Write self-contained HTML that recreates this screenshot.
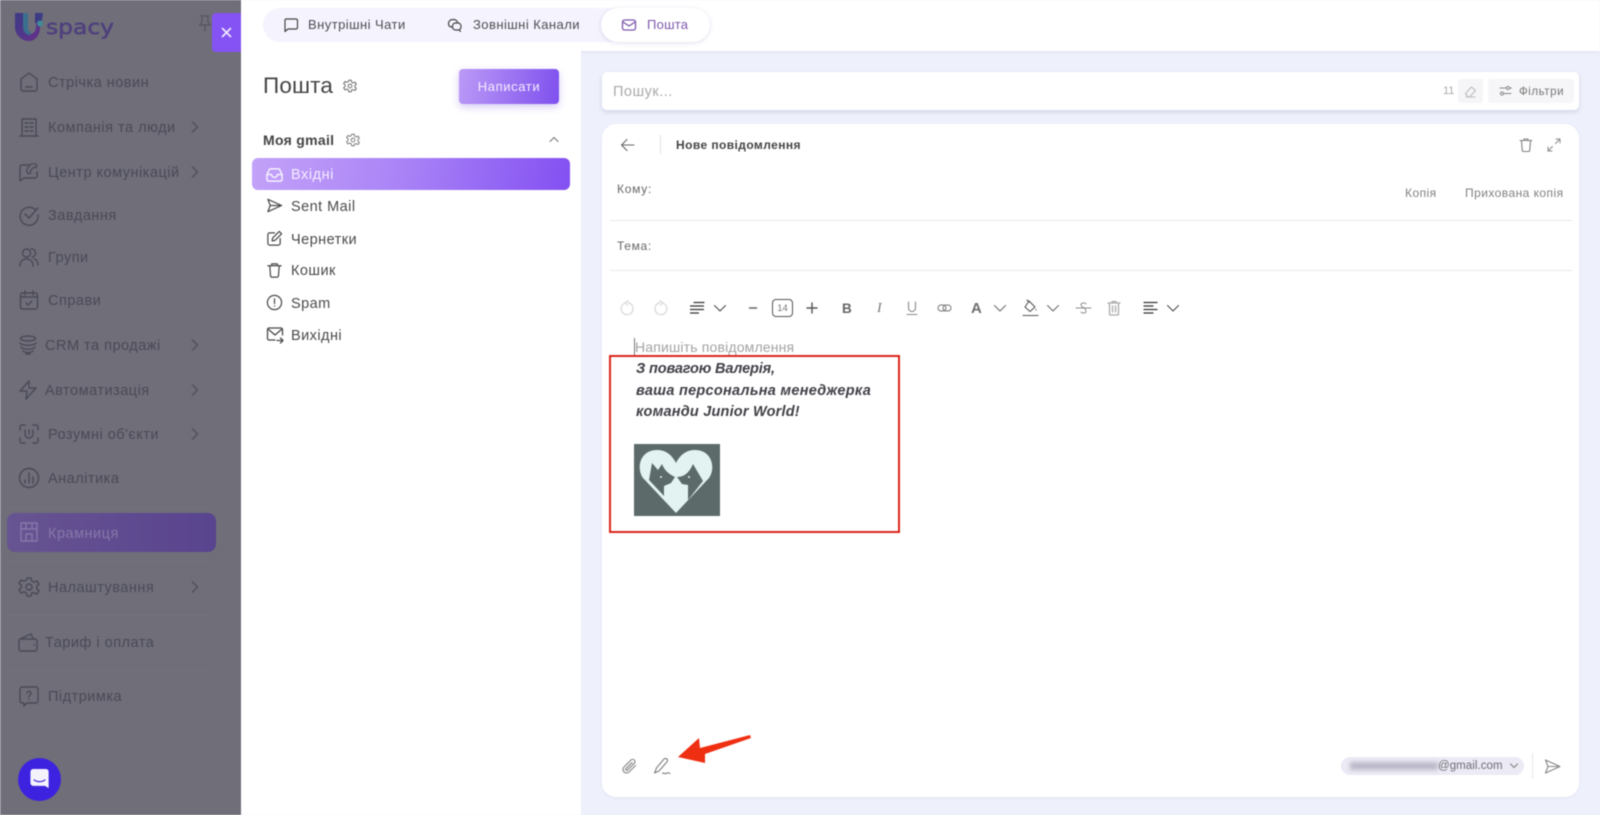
<!DOCTYPE html>
<html lang="uk"><head><meta charset="utf-8"><title>Пошта</title>
<style>
html,body{margin:0;padding:0;width:1600px;height:815px;overflow:hidden;background:#eef0fb}
body{font-family:"Liberation Sans",sans-serif;position:relative}
#w{position:absolute;left:0;top:0;width:1600px;height:815px;filter:blur(.45px);overflow:hidden}
.a{position:absolute}
.t{position:absolute;white-space:nowrap;line-height:18px;height:18px}
svg.i{position:absolute;fill:none;stroke-linecap:round;stroke-linejoin:round}
.m{color:#4a4a57;font-size:14.5px;letter-spacing:.5px}
.m2{color:#4b4b4b;font-size:14.5px;letter-spacing:.45px}
svg.s1{stroke:#4a4a57;stroke-width:1.4}
svg.s2{stroke:#4a4a4a;stroke-width:1.3}
svg.s3{stroke:#444;stroke-width:1.2}
svg.s4{stroke:#8a8a8a;stroke-width:1.3}
.sep{position:absolute;left:8px;width:200px;height:1px;background:#74737d}
</style></head><body><div id="w">

<!-- sidebar -->
<div class="a" style="left:0;top:0;width:241px;height:815px;background:#6f6e79"></div>
<div class="a" style="left:0;top:0;width:1px;height:815px;background:#85848d"></div>
<!-- logo -->
<svg class="a" style="left:13px;top:11px" width="105" height="32" viewBox="0 0 105 32">
<defs><linearGradient id="lg" x1="0" y1="0" x2="1" y2="1"><stop offset="0" stop-color="#3c3b85"/><stop offset=".6" stop-color="#56358a"/><stop offset="1" stop-color="#6a2f86"/></linearGradient></defs>
<path d="M2 2h9v13c0 5 2.500 8 6 8s6-3 6-7V2h5l2 0h0v0c-.5 2-1 3-2 4l-1 11c-.5 8-5 13-11 13S2 25 2 16z" fill="url(#lg)"/>
<path d="M10 2h5v15c0 2 1 4 3 4l-1 3c-4 0-7-3-7-8z" fill="#3a6f8e"/>
<path d="M22 2h8l-1 7-4 3-3 0z" fill="#3d3a86"/>
<circle cx="27" cy="12.500" r="3" fill="#3f8b96"/>
<text x="33" y="23" font-family="DejaVu Sans,sans-serif" font-size="20" fill="#4f3f7d" stroke="#4f3f7d" stroke-width=".5" textLength="68" lengthAdjust="spacingAndGlyphs">spacy</text>
</svg>
<!-- pin -->
<svg class="i" style="left:197px;top:14px" width="16" height="19" viewBox="0 0 16 19" stroke="#55545f" stroke-width="1.200"><path d="M4 2h8M5 2v6L2.500 11h11L11 8V2M8 11v6"/></svg>
<!-- close -->
<div class="a" style="left:212px;top:13px;width:29px;height:39px;background:#8553f3;border-radius:4px 0 0 4px"></div>
<svg class="i" style="left:220px;top:26px" width="13" height="13" viewBox="0 0 13 13" stroke="#f3ecff" stroke-width="1.600"><path d="M2.500 2.500l8 8M10.500 2.500l-8 8"/></svg>

<div class="sep" style="top:507px"></div><div class="sep" style="top:561px"></div><div class="sep" style="top:615px"></div><div class="sep" style="top:670px"></div>
<!-- Krамниця pill -->
<div class="a" style="left:7px;top:513px;width:209px;height:39px;border-radius:8px;background:linear-gradient(90deg,#675491,#59448f)"></div>

<div class="t m" style="left:48px;top:74px">Стрічка новин</div>
<div class="t m" style="left:48px;top:119px">Компанія та люди</div>
<div class="t m" style="left:48px;top:164px">Центр комунікацій</div>
<div class="t m" style="left:48px;top:207px">Завдання</div>
<div class="t m" style="left:48px;top:249px">Групи</div>
<div class="t m" style="left:48px;top:292px">Справи</div>
<div class="t m" style="left:45px;top:337px">CRM та продажі</div>
<div class="t m" style="left:45px;top:382px">Автоматизація</div>
<div class="t m" style="left:48px;top:426px">Розумні об'єкти</div>
<div class="t m" style="left:48px;top:470px">Аналітика</div>
<div class="t m" style="left:48px;top:525px;color:#8777a9">Крамниця</div>
<div class="t m" style="left:48px;top:579px">Налаштування</div>
<div class="t m" style="left:45px;top:634px">Тариф і оплата</div>
<div class="t m" style="left:48px;top:688px">Підтримка</div>

<!-- sidebar icons -->
<svg class="i s1" style="left:18px;top:71px" width="22" height="22" viewBox="0 0 22 22"><path d="M3 8l8-6 8 6v10a2 2 0 0 1-2 2H5a2 2 0 0 1-2-2z"/><path d="M8 16h6"/></svg>
<svg class="i s1" style="left:18px;top:116px" width="22" height="22" viewBox="0 0 22 22"><path d="M4 20V3h14v17M2 20h18M7 7h3M12 7h3M7 11h3M12 11h3M7 15h3M12 15h3"/></svg>
<svg class="i s1" style="left:18px;top:161px" width="22" height="22" viewBox="0 0 22 22"><path d="M12 4H4a2 2 0 0 0-2 2v14l4-3h11a2 2 0 0 0 2-2v-4"/><path d="M13 3a6 6 0 0 1 6 1l-1 3-2-1-2 2-2 2 1 2-3 1a6 6 0 0 1-1-5z" stroke-width="1.200"/></svg>
<svg class="i s1" style="left:18px;top:204px" width="22" height="22" viewBox="0 0 22 22"><path d="M18 6.500A9 9 0 1 0 20 11"/><path d="M7 10l4 4 9-10"/></svg>
<svg class="i s1" style="left:18px;top:246px" width="22" height="22" viewBox="0 0 22 22"><circle cx="8.500" cy="7" r="4"/><path d="M13 3a4 4 0 0 1 1 8M2 20c0-5 3-7 6.500-7s6.500 2 6.500 7M16 13c2.500.5 4 3 4 6"/></svg>
<svg class="i s1" style="left:18px;top:289px" width="22" height="22" viewBox="0 0 22 22"><rect x="2.500" y="4" width="17" height="16" rx="2"/><path d="M2.500 8h17M7 2v4M15 2v4M8 14l2 2 4-4"/></svg>
<svg class="i s1" style="left:17px;top:334px" width="22" height="22" viewBox="0 0 22 22"><ellipse cx="11" cy="4.500" rx="7.500" ry="2.500"/><path d="M3 9c2 3 14 3 16 0M4 13c2 3 12 3 14 0M6 17c2 2 8 2 10 0M9 20h4"/></svg>
<svg class="i s1" style="left:17px;top:379px" width="22" height="22" viewBox="0 0 22 22"><path d="M12 2L3 12h7l-1 8 10-11h-7z"/></svg>
<svg class="i s1" style="left:18px;top:423px" width="22" height="22" viewBox="0 0 22 22"><path d="M2 7V4a2 2 0 0 1 2-2h3M15 2h3a2 2 0 0 1 2 2v3M20 15v3a2 2 0 0 1-2 2h-3M7 20H4a2 2 0 0 1-2-2v-3M7 7v4a4 4 0 0 0 8 0V7M11 7v4"/></svg>
<svg class="i s1" style="left:18px;top:467px" width="22" height="22" viewBox="0 0 22 22"><circle cx="11" cy="11" r="9.500"/><path d="M7 13v3M11 6v10M15 10v6"/></svg>
<svg class="i" style="left:18px;top:521px" width="22" height="22" viewBox="0 0 22 22" stroke="#8777a9" stroke-width="1.400"><path d="M3 2h16v18H3zM3 8h16M8 2v6M14 2v6M8 20v-7h6v7"/></svg>
<svg class="i s1" style="left:18px;top:576px" width="22" height="22" viewBox="0 0 22 22"><circle cx="11" cy="11" r="3"/><path d="M9 2h4l.7 3 2.500 1.200 2.800-1.300 2 3.400-2.300 2v2.400l2.300 2-2 3.400-2.800-1.300L13.700 17l-.7 3H9l-.7-3-2.500-1.200L3 17.100l-2-3.400 2.300-2V9.300L1 7.300l2-3.400 2.800 1.300L8.300 4z"/></svg>
<svg class="i s1" style="left:17px;top:631px" width="22" height="22" viewBox="0 0 22 22"><path d="M3 8l11-5 2 5M3 8h15a2 2 0 0 1 2 2v8a2 2 0 0 1-2 2H4a2 2 0 0 1-2-2v-9"/><path d="M17 14h.5"/></svg>
<svg class="i s1" style="left:18px;top:685px" width="22" height="22" viewBox="0 0 22 22"><path d="M4 2h14a2 2 0 0 1 2 2v12a2 2 0 0 1-2 2H9l-3 3v-3H4a2 2 0 0 1-2-2V4a2 2 0 0 1 2-2z"/><path d="M9 8a2 2 0 1 1 3 2l-1 1v1M11 14.500v.2"/></svg>
<!-- chevrons -->
<svg class="i" style="left:190px;top:120px" width="10" height="14" viewBox="0 0 10 14" stroke="#55545f" stroke-width="1.700"><path d="M2.500 2l5 5-5 5"/></svg>
<svg class="i" style="left:190px;top:165px" width="10" height="14" viewBox="0 0 10 14" stroke="#55545f" stroke-width="1.700"><path d="M2.500 2l5 5-5 5"/></svg>
<svg class="i" style="left:190px;top:338px" width="10" height="14" viewBox="0 0 10 14" stroke="#55545f" stroke-width="1.700"><path d="M2.500 2l5 5-5 5"/></svg>
<svg class="i" style="left:190px;top:383px" width="10" height="14" viewBox="0 0 10 14" stroke="#55545f" stroke-width="1.700"><path d="M2.500 2l5 5-5 5"/></svg>
<svg class="i" style="left:190px;top:427px" width="10" height="14" viewBox="0 0 10 14" stroke="#55545f" stroke-width="1.700"><path d="M2.500 2l5 5-5 5"/></svg>
<svg class="i" style="left:190px;top:580px" width="10" height="14" viewBox="0 0 10 14" stroke="#55545f" stroke-width="1.700"><path d="M2.500 2l5 5-5 5"/></svg>
<!-- chat bubble -->
<div class="a" style="left:18px;top:758px;width:43px;height:43px;border-radius:50%;background:#3d22e0"></div>
<svg class="a" style="left:30px;top:769px" width="20" height="20" viewBox="0 0 21 22"><path d="M3 0h14a3 3 0 0 1 3 3v18l-4-2.500H3a3 3 0 0 1-3-3V3a3 3 0 0 1 3-3z" fill="#f4f3fb"/><path d="M4 12c3 2.500 9 2.500 12 0" fill="none" stroke="#3d22e0" stroke-width="1.300" stroke-linecap="round"/></svg>

<!-- top bar -->
<div class="a" style="left:241px;top:0;width:1359px;height:51px;background:#fff;box-shadow:0 1px 4px rgba(120,120,170,.12)"></div>
<div class="a" style="left:263px;top:8px;width:447px;height:34px;border-radius:17px;background:#f5f3fd"></div>
<div class="a" style="left:601px;top:8px;width:109px;height:34px;border-radius:17px;background:#fff;box-shadow:0 1px 5px rgba(110,90,170,.2)"></div>
<svg class="i s3" style="left:283px;top:17px" width="16" height="16" viewBox="0 0 16 16"><path d="M3 2h10a1.500 1.500 0 0 1 1.500 1.500v7A1.500 1.500 0 0 1 13 12H5l-3 2.500V3A1 1 0 0 1 3 2z"/></svg>
<svg class="i s3" style="left:447px;top:17px" width="16" height="16" viewBox="0 0 16 16"><path d="M5 10c-2.500 0-3.500-1.500-3.500-3.500S3 2.500 6 2.500s4.500 1.500 4.500 3"/><rect x="5.500" y="6" width="8.500" height="7" rx="3"/><path d="M12 13l1.500 1.500"/></svg>
<svg class="i" style="left:621px;top:17px" width="16" height="16" viewBox="0 0 16 16" stroke="#7c57ab" stroke-width="1.300"><rect x="1.500" y="3" width="13" height="10" rx="2"/><path d="M2 5l6 4 6-4"/></svg>
<div class="t" style="left:308px;top:16px;font-size:13px;color:#4d4d52;letter-spacing:.45px">Внутрішні Чати</div>
<div class="t" style="left:473px;top:16px;font-size:13px;color:#4d4d52;letter-spacing:.45px">Зовнішні Канали</div>
<div class="t" style="left:647px;top:16px;font-size:13px;color:#7c57ab;letter-spacing:.25px">Пошта</div>

<!-- left panel -->
<div class="a" style="left:241px;top:51px;width:340px;height:764px;background:#fff"></div>
<div class="t" style="left:263px;top:75px;font-size:22.500px;line-height:22px;height:22px;color:#444;letter-spacing:.15px">Пошта</div>
<svg class="i" style="left:343px;top:79px" width="14" height="14" viewBox="0 0 22 22" stroke-width="1.500" stroke="#666"><circle cx="11" cy="11" r="3"/><path d="M9 2h4l.7 3 2.500 1.200 2.800-1.300 2 3.400-2.300 2v2.400l2.300 2-2 3.400-2.800-1.300L13.700 17l-.7 3H9l-.7-3-2.500-1.200L3 17.100l-2-3.400 2.300-2V9.300L1 7.300l2-3.400 2.800 1.300L8.300 4z"/></svg>
<div class="a" style="left:459px;top:69px;width:100px;height:35px;border-radius:4px;background:linear-gradient(100deg,#bb9af7,#7f50ee);box-shadow:0 3px 8px rgba(120,80,220,.3);color:#f4edff;font-size:13px;line-height:35px;text-align:center;letter-spacing:.6px">Написати</div>
<div class="t" style="left:263px;top:131px;font-size:14px;font-weight:700;color:#444;letter-spacing:.3px">Моя gmail</div>
<svg class="i" style="left:346px;top:133px" width="14" height="14" viewBox="0 0 22 22" stroke-width="1.500" stroke="#777"><circle cx="11" cy="11" r="3"/><path d="M9 2h4l.7 3 2.500 1.200 2.800-1.300 2 3.400-2.300 2v2.400l2.300 2-2 3.400-2.800-1.300L13.700 17l-.7 3H9l-.7-3-2.500-1.200L3 17.100l-2-3.400 2.300-2V9.300L1 7.300l2-3.400 2.800 1.300L8.300 4z"/></svg>
<svg class="i" style="left:548px;top:135px" width="12" height="9" viewBox="0 0 12 9" stroke="#777" stroke-width="1.100"><path d="M2 6.500l4-4 4 4"/></svg>
<div class="a" style="left:252px;top:158px;width:318px;height:32px;border-radius:6px;background:linear-gradient(100deg,#c3a2f8 0%,#ab85f7 45%,#8350f2 100%)"></div>
<svg class="i" style="left:266px;top:166px" width="17" height="17" viewBox="0 0 18 18" stroke="#f6f0ff" stroke-width="1.600"><path d="M4 3h10l3 6v5a2 2 0 0 1-2 2H3a2 2 0 0 1-2-2V9z"/><path d="M1 9h5c0 2 1 3 3 3s3-1 3-3h5"/></svg>
<div class="t" style="left:291px;top:166px;font-size:14.500px;color:#f4edff;letter-spacing:.55px">Вхідні</div>
<div class="t m2" style="left:291px;top:198px">Sent Mail</div>
<div class="t m2" style="left:291px;top:231px">Чернетки</div>
<div class="t m2" style="left:291px;top:262px">Кошик</div>
<div class="t m2" style="left:291px;top:295px">Spam</div>
<div class="t m2" style="left:291px;top:327px">Вихідні</div>
<svg class="i s2" style="left:266px;top:197px" width="17" height="17" viewBox="0 0 18 18"><path d="M2 2.500L16.500 9 2 15.500 4.500 9zM4.500 9h12"/></svg>
<svg class="i s2" style="left:266px;top:230px" width="17" height="17" viewBox="0 0 18 18"><path d="M9 3H4a2 2 0 0 0-2 2v9a2 2 0 0 0 2 2h9a2 2 0 0 0 2-2V9"/><path d="M7 8.500L14 1.500l2.500 2.500-7 7L6.500 11.500z"/></svg>
<svg class="i s2" style="left:266px;top:262px" width="17" height="17" viewBox="0 0 18 18"><path d="M2 4h14M6 4V2h6v2M4 4l.8 10.500A1.500 1.500 0 0 0 6.300 16h5.400a1.500 1.500 0 0 0 1.500-1.500L14 4"/></svg>
<svg class="i s2" style="left:266px;top:294px" width="17" height="17" viewBox="0 0 18 18"><circle cx="9" cy="9" r="7.500"/><path d="M9 5v5M9 12.500v.3"/></svg>
<svg class="i s2" style="left:266px;top:326px" width="18" height="18" viewBox="0 0 18 18"><path d="M9 14H3a1.500 1.500 0 0 1-1.500-1.500v-9A1.500 1.500 0 0 1 3 2h12a1.500 1.500 0 0 1 1.500 1.500V9"/><path d="M2 3l7 6 7-6M11 14.500h6M14.500 12l2.500 2.500-2.500 2.500"/></svg>

<!-- search -->
<div class="a" style="left:602px;top:72px;width:977px;height:38px;background:#fff;border-radius:5px;box-shadow:0 2px 5px rgba(110,110,160,.22)"></div>
<div class="t" style="left:613px;top:83px;font-size:14.500px;color:#a9a9a9;letter-spacing:.5px">Пошук...</div>
<div class="t" style="left:1443px;top:82px;font-size:11px;color:#aaa">11</div>
<div class="a" style="left:1458px;top:79px;width:25px;height:24px;background:#f5f5f7;border-radius:3px"></div>
<svg class="i" style="left:1463px;top:84px" width="15" height="15" viewBox="0 0 15 15" stroke="#bbb" stroke-width="1.100"><path d="M3 13h9M2.500 9.500l6-6.500 4 3.500-6 6.500H5z"/></svg>
<div class="a" style="left:1488px;top:79px;width:86px;height:24px;background:#f6f6f8;border-radius:3px"></div>
<svg class="i" style="left:1499px;top:85px" width="13" height="12" viewBox="0 0 13 12" stroke="#888" stroke-width="1"><circle cx="9" cy="3" r="1.500"/><circle cx="3" cy="8.500" r="1.500"/><path d="M1 3h6M11 3h1.500M5 8.500h7"/></svg>
<div class="t" style="left:1519px;top:83px;font-size:11.500px;color:#777;letter-spacing:.55px">Фільтри</div>

<!-- composer -->
<div class="a" style="left:602px;top:124px;width:977px;height:673px;background:#fff;border-radius:14px;box-shadow:0 1px 3px rgba(110,110,160,.08)"></div>
<svg class="i" style="left:620px;top:138px" width="15" height="14" viewBox="0 0 15 14" stroke="#666" stroke-width="1.100"><path d="M14 7H1.500M7 1.500L1.500 7 7 12.500"/></svg>
<div class="a" style="left:660px;top:135px;width:1px;height:19px;background:#e2e2e6"></div>
<div class="t" style="left:676px;top:136px;font-size:12px;font-weight:700;color:#444;letter-spacing:.42px">Нове повідомлення</div>
<svg class="i" style="left:1518px;top:137px" width="16" height="16" viewBox="0 0 16 16" stroke="#808080" stroke-width="1.100"><path d="M2 3.500h12M6 3.500V2h4v1.500M3.500 3.500l.7 9.500a1.500 1.500 0 0 0 1.500 1.500h4.600a1.500 1.500 0 0 0 1.500-1.500l.7-9.500"/></svg>
<svg class="i" style="left:1546px;top:137px" width="16" height="16" viewBox="0 0 16 16" stroke="#8a8a8a" stroke-width="1"><path d="M9.500 6.500L14 2M10 2h4v4M6.500 9.500L2 14M2 10v4h4"/></svg>
<div class="t" style="left:617px;top:180px;font-size:12px;color:#666;letter-spacing:.75px">Кому:</div>
<div class="t" style="left:1405px;top:184px;font-size:12px;color:#808080;letter-spacing:.45px">Копія</div>
<div class="t" style="left:1465px;top:184px;font-size:12px;color:#808080;letter-spacing:.45px">Прихована копія</div>
<div class="a" style="left:610px;top:220px;width:962px;height:1px;background:#e9e9ee"></div>
<div class="t" style="left:617px;top:237px;font-size:12px;color:#666;letter-spacing:.65px">Тема:</div>
<div class="a" style="left:610px;top:270px;width:962px;height:1px;background:#e9e9ee"></div>

<!-- toolbar -->
<svg class="i" style="left:620px;top:300px" width="16" height="16" viewBox="0 0 16 16" stroke="#dadada" stroke-width="1.300"><path d="M4 3.500a6 6 0 1 0 4-.8M8 .8L5 2.800l2.500 2.400"/></svg>
<svg class="i" style="left:652px;top:300px" width="16" height="16" viewBox="0 0 16 16" stroke="#dadada" stroke-width="1.300"><path d="M12 3.500a6 6 0 1 1-4-.8M8 .8l3 2-2.500 2.400"/></svg>
<svg class="i" style="left:689px;top:300px" width="16" height="16" viewBox="0 0 16 16" stroke="#333" stroke-width="1.200"><path d="M5 2.500h10M1.500 6h13M1.500 9.500h13M1.500 13h8"/></svg>
<svg class="i" style="left:713px;top:303px" width="14" height="10" viewBox="0 0 14 10" stroke="#444" stroke-width="1"><path d="M1.500 2.500L7 8l5.500-5.500"/></svg>
<svg class="i" style="left:748px;top:303px" width="10" height="10" viewBox="0 0 10 10" stroke="#666" stroke-width="1.500"><path d="M1.500 5h7"/></svg>
<div class="a" style="left:772px;top:299px;width:19px;height:16px;border:1.500px solid #555;border-radius:4px;font-size:9.500px;line-height:17px;text-align:center;color:#777">14</div>
<svg class="i" style="left:806px;top:302px" width="12" height="12" viewBox="0 0 12 12" stroke="#555" stroke-width="1.400"><path d="M1 6h10M6 1v10"/></svg>
<div class="t" style="left:842px;top:300px;font-size:13.500px;font-weight:700;color:#666">B</div>
<div class="t" style="left:877px;top:300px;font-size:14px;font-style:italic;font-family:'Liberation Serif',serif;color:#777">I</div>
<svg class="i" style="left:905px;top:300px" width="14" height="16" viewBox="0 0 14 16" stroke="#888" stroke-width="1.100"><path d="M3.500 2v6a3.500 3.500 0 0 0 7 0V2M2 14.500h10"/></svg>
<svg class="i" style="left:937px;top:302px" width="15" height="12" viewBox="0 0 15 12" stroke="#777" stroke-width="1"><rect x="1" y="3" width="8" height="6" rx="3"/><rect x="6" y="3" width="8" height="6" rx="3"/></svg>
<div class="t" style="left:971px;top:300px;font-size:15px;font-weight:700;color:#6f6f6f">A</div>
<svg class="i" style="left:993px;top:303px" width="14" height="10" viewBox="0 0 14 10" stroke="#666" stroke-width="1"><path d="M1.500 2.500L7 8l5.500-5.500"/></svg>
<svg class="i" style="left:1022px;top:299px" width="18" height="18" viewBox="0 0 18 18" stroke="#555" stroke-width="1.100"><path d="M7 2l6 6-5 4.500L3 8zM5 1l2 2M14 10.500v.5M1 16.500h15"/></svg>
<svg class="i" style="left:1046px;top:303px" width="14" height="10" viewBox="0 0 14 10" stroke="#666" stroke-width="1"><path d="M1.500 2.500L7 8l5.500-5.500"/></svg>
<svg class="i" style="left:1075px;top:300px" width="17" height="16" viewBox="0 0 17 16" stroke="#8a8a8a" stroke-width="1"><path d="M1 8h15M11 4C10 2.500 6.500 2.500 6 4.500 5.500 7 11 8 11 11c0 2.500-4 2.500-5 1"/></svg>
<svg class="i" style="left:1107px;top:300px" width="14" height="16" viewBox="0 0 14 16" stroke="#aaa" stroke-width="1.300"><path d="M1 3h12M5 3V1.500h4V3M2.500 3v11a1 1 0 0 0 1 1h7a1 1 0 0 0 1-1V3M5.500 6v6M8.500 6v6"/></svg>
<svg class="i" style="left:1143px;top:300px" width="15" height="16" viewBox="0 0 15 16" stroke="#333" stroke-width="1.200"><path d="M1 2.500h13M1 6h9M1 9.500h13M1 13h9"/></svg>
<svg class="i" style="left:1166px;top:303px" width="14" height="10" viewBox="0 0 14 10" stroke="#444" stroke-width="1"><path d="M1.500 2.500L7 8l5.500-5.500"/></svg>

<!-- body -->
<div class="a" style="left:634px;top:338px;width:1px;height:17px;background:#777"></div>
<div class="t" style="left:635px;top:338px;font-size:14px;color:#a3a3a3;letter-spacing:.17px">Напишіть повідомлення</div>
<div class="t" style="left:636px;top:360px;font-size:14.500px;font-weight:700;font-style:italic;color:#3f3f46;letter-spacing:-.15px">З повагою Валерія,</div>
<div class="t" style="left:636px;top:382px;font-size:14.500px;font-weight:700;font-style:italic;color:#3f3f46;letter-spacing:.27px">ваша персональна менеджерка</div>
<div class="t" style="left:636px;top:403px;font-size:14.500px;font-weight:700;font-style:italic;color:#3f3f46;letter-spacing:.2px">команди Junior World!</div>
<svg class="a" style="left:634px;top:444px" width="86" height="72" viewBox="0 0 86 72">
<rect width="86" height="72" fill="#5c6b69"/>
<path d="M42 69L9 34C2 24 6 6 23 6c9 0 15 5 19 13 4-8 10-13 19-13 17 0 21 18 14 28z" fill="#e2f3f2"/>
<path d="M15 36L18 19l6 7 4-6c3 8 9 11 13 13l-4 6-7 3v10z" fill="#5c6b69"/>
<path d="M43 33c7 0 12-4 16-13l10 17-15 19V41l-6-1z" fill="#5c6b69"/>
<circle cx="27" cy="33" r="1" fill="#e2f3f2"/><circle cx="55" cy="33" r="1" fill="#e2f3f2"/>
</svg>
<!-- red box -->
<div class="a" style="left:609px;top:355px;width:287px;height:174px;border:2.500px solid #dc241c"></div>

<!-- footer -->
<svg class="i" style="left:621px;top:758px" width="17" height="17" viewBox="0 0 17 17" stroke="#8a8a8a" stroke-width="1.200"><path d="M14.500 7.500l-6.500 6.500a3.500 3.500 0 0 1-5-5l7-7a2.300 2.300 0 0 1 3.300 3.300l-6.800 6.800a1 1 0 0 1-1.500-1.500l6-6"/></svg>
<svg class="i" style="left:653px;top:757px" width="19" height="19" viewBox="0 0 19 19" stroke="#808080" stroke-width="1.100"><path d="M1.500 16l2-5L11 2c1-1.200 3.500-.5 3.500 1.500 0 .6-.2 1-.7 1.500L6 14zM9.500 16.500c1.500-1.800 2 1 3.500 0s2-.7 4 0"/></svg>
<svg class="a" style="left:675px;top:733px" width="78" height="34" viewBox="0 0 78 34"><path d="M3 24L24 5l1 10L75 2l1 3-46 16v9z" fill="#ef2f12"/></svg>
<div class="a" style="left:1341px;top:757px;width:183px;height:18px;border-radius:9px;background:#eceaf4"></div>
<div class="a" style="left:1350px;top:762px;width:88px;height:8px;background:#b2b1c1;filter:blur(2px);opacity:.85"></div>
<div class="t" style="left:1438px;top:757px;font-size:11.500px;color:#6d6d75;letter-spacing:.05px">@gmail.com</div>
<svg class="i" style="left:1509px;top:762px" width="10" height="8" viewBox="0 0 10 8" stroke="#888" stroke-width="1.200"><path d="M1.500 2L5 5.500 8.500 2"/></svg>
<div class="a" style="left:1532px;top:753px;width:1px;height:26px;background:#e8e8ec"></div>
<svg class="i" style="left:1544px;top:758px" width="17" height="17" viewBox="0 0 17 17" stroke="#888" stroke-width="1.100"><path d="M1.500 2L16 8.500 1.500 15 4 8.500zM4 8.500h12"/></svg>
</div></body></html>
